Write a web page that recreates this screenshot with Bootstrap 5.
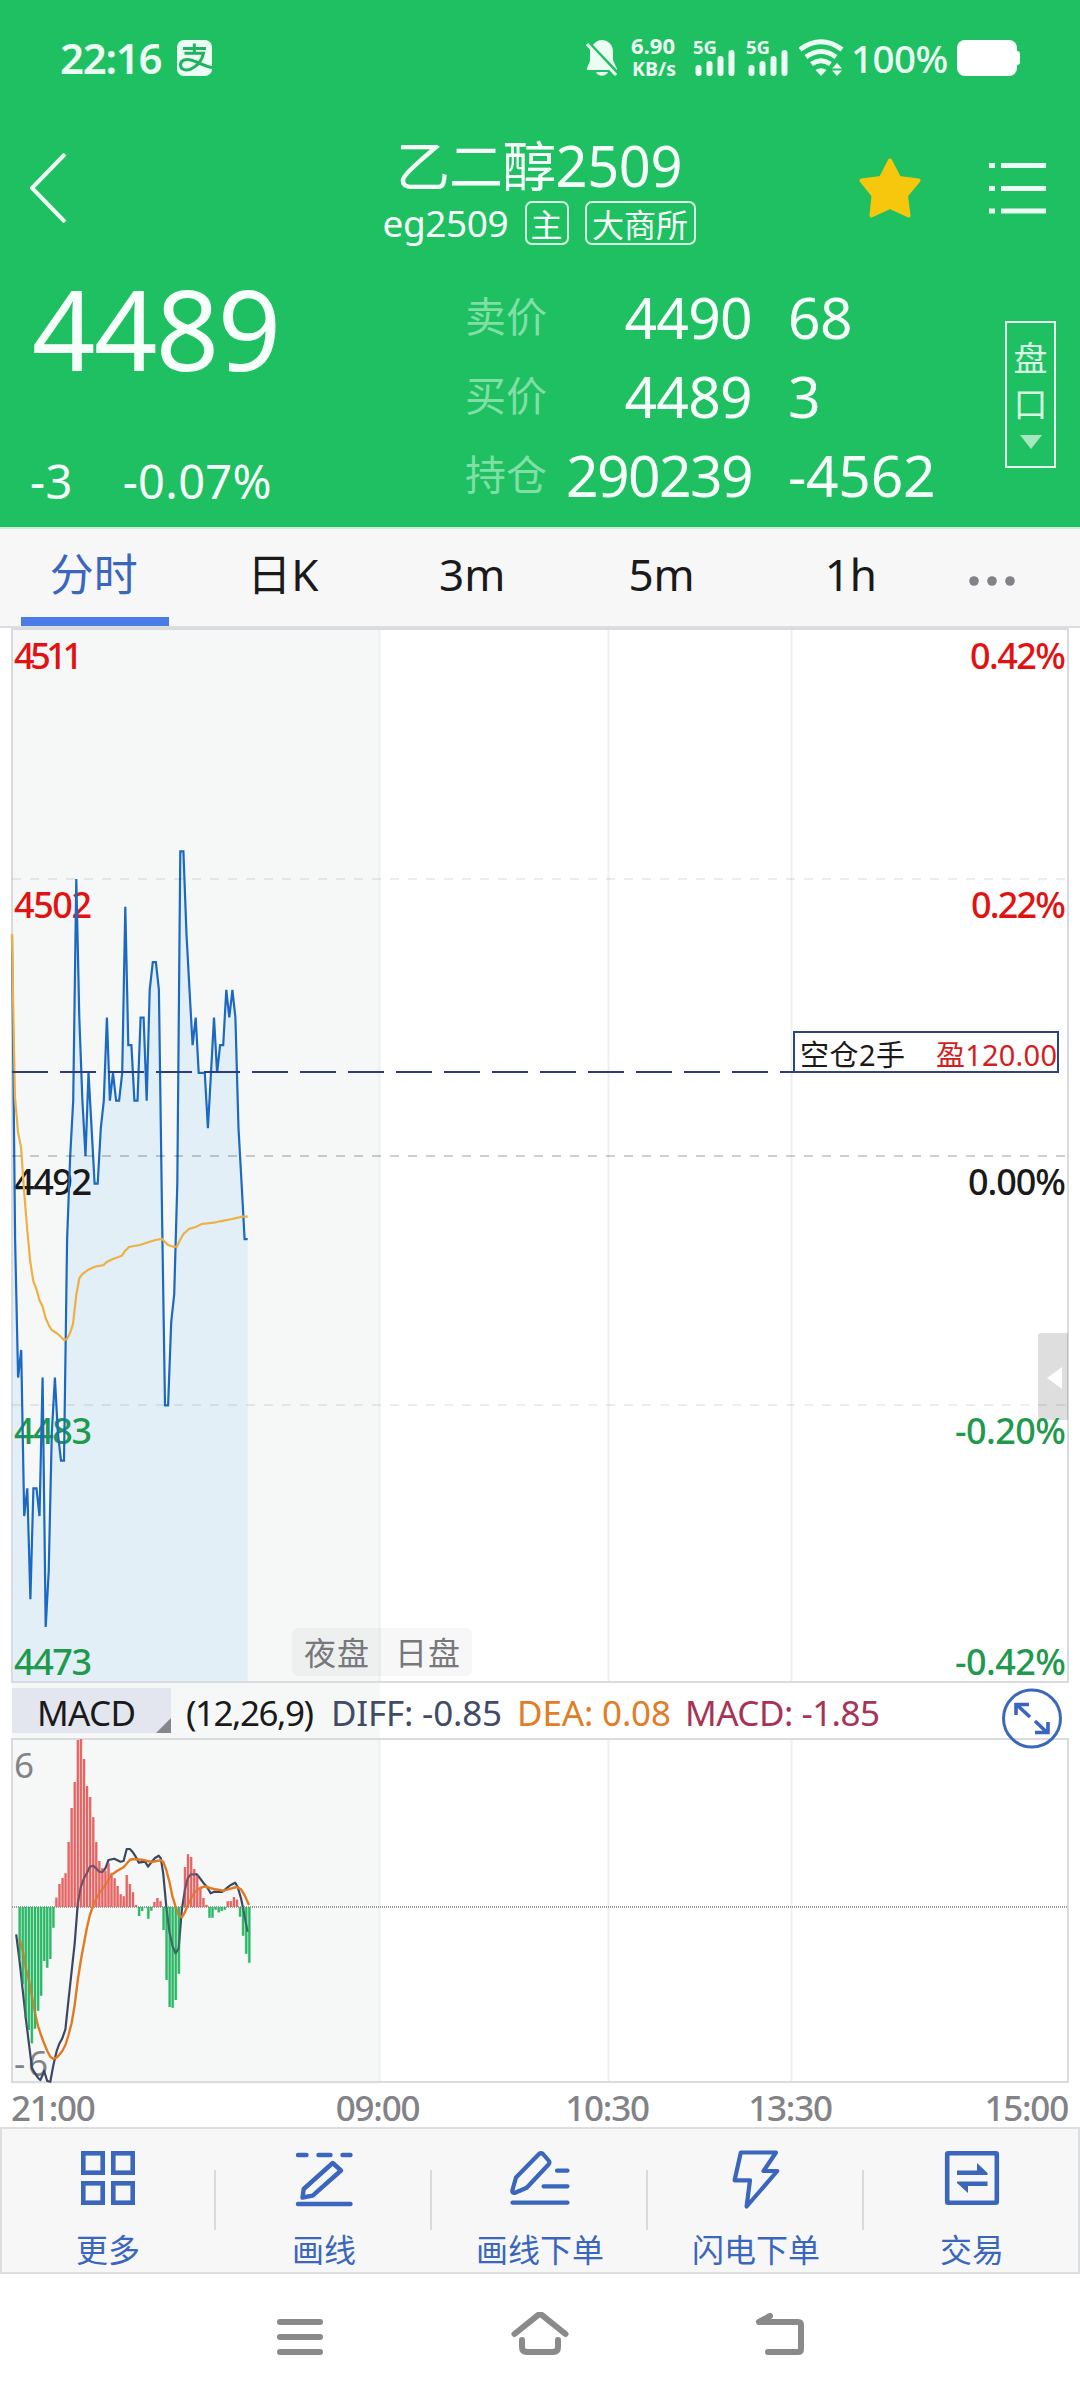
<!DOCTYPE html>
<html lang="zh-CN">
<head>
<meta charset="utf-8">
<meta name="viewport" content="width=1080">
<title>乙二醇2509</title>
<link rel="stylesheet" href="https://cdn.jsdelivr.net/npm/bootstrap@5.3.0/dist/css/bootstrap.min.css">
<style>
body{width:1080px;margin:0 auto;background:#fff;font-family:"Noto Sans","Noto Sans CJK SC",sans-serif;line-height:1;color:#1a1a1a;overflow-x:hidden}
svg{display:block;flex:none}
svg text{font-family:"Noto Sans","Noto Sans CJK SC",sans-serif}
.quote-head{background:#1fc061;color:#f6fffa;height:527px}
.status-row{height:116px;padding:0 60px;color:#ecfdf3}
.clock{font-size:42px;font-weight:600;width:102px;letter-spacing:-1.3px}
.title-row{height:143px}
.title-mid{padding-top:5px;padding-left:2px}
.name-line{font-size:56px;line-height:60px;letter-spacing:-.4px;margin-top:-1px}
.name-line span{font-size:54px;letter-spacing:-.8px}
.code-line{font-size:37px;height:44px;margin-top:5px;gap:16px}
.code-line .code{width:126px;letter-spacing:-.4px}
.chip-line{border:2px solid #d8f8e4;border-radius:7px;height:44px;font-size:32px;line-height:40px;font-family:"Noto Sans CJK SC",sans-serif}
.last-col{width:465px;padding-left:30px}
.last-price{font-size:111px;line-height:138px;letter-spacing:-1.6px;padding-left:2px;height:140px}
.last-change{font-size:47px;line-height:60px;margin-top:52px;gap:50px;letter-spacing:.3px}
.quote-grid{padding-top:20px;width:540px}
.quote-line{height:79px;font-size:57px;letter-spacing:-.7px}
.quote-line .tag{width:84px;font-size:41px;color:#7fdfa5;letter-spacing:0;margin-top:-8px;font-family:"Noto Sans CJK SC",sans-serif}
.quote-line .num{width:203px;margin-top:-3px}
.quote-line .vol{margin-left:36px;margin-top:-3px}
.quote-line .num.long{letter-spacing:-1.6px}
.quote-line .vol.long{letter-spacing:-.3px}
.pankou{width:51px;height:147px;margin-top:62px;border:2px solid #e3faec;font-size:34px;color:#d5f6e1;padding-top:17px;font-family:"Noto Sans CJK SC",sans-serif}
.period-tabs{height:101px;background:#f7f7f8;border-top:2px solid #cdeeda;border-bottom:2px solid #dbdde1;font-size:44px}
.period-tabs .nav-link{width:189.3px;color:#1a1a1a;padding:0;height:97px;line-height:91px;text-align:center;position:relative;left:-1px}
.period-tabs .nav-link.active{color:#3a66bd}
.period-tabs .nav-link.active::after{content:"";position:absolute;left:22px;right:19px;bottom:0;height:9px;background:#4b7be5}
.chart-zone{background:linear-gradient(to right,#fff 12px,#f6f8f8 12px 380px,#fff 380px)}
.ind-row{height:54px;padding:4px 17px 0 12px;font-size:34.5px}
.ind-btn{width:159px;height:45px;background:#e3e5ef;padding-left:25px;position:relative}
.ind-btn::after{content:"";position:absolute;right:0;bottom:0;border:solid transparent;border-width:0 0 15px 15px;border-bottom-color:#85858b}
.expand{position:relative;z-index:2}
.axis-row{height:43px;padding:0 12px 0 11px;font-size:35px;font-weight:500;color:#828287;line-height:47px;letter-spacing:-1.2px}
.tool-bar{height:147px;background:#f7f7f8;border:2px solid #dcdee0}
.tool-bar .tool{flex:0 0 216px;color:#3a66bd;font-size:32px;padding-top:18px;position:relative;left:-2px;font-family:"Noto Sans CJK SC",sans-serif}
.tool+.tool::before{content:"";position:absolute;left:-2px;top:41px;width:2px;height:60px;background:#d9dadd}
.tool svg{margin-bottom:21px}
.sys-bar{height:126px;width:720px}
</style>
<script src="https://cdn.jsdelivr.net/npm/bootstrap@5.3.0/dist/js/bootstrap.bundle.min.js"></script>
</head>
<body>
<header class="quote-head">
  <div class="status-row d-flex align-items-center">
    <span class="clock text-nowrap">22:16</span>
    <svg style="margin-left:15px" width="35" height="36" viewBox="0 0 35 36"><rect width="35" height="36" rx="7" fill="#ecfdf3"/><g fill="none" stroke="#20b35f" stroke-width="3"><path d="M6 8.500H29M17.300 3.500V13M7.500 13.300H26.500C25 20 20 26 14 29C8 31.500 3.500 29 3.500 24.500C4 20 9 18.500 14 20C20 21.500 27 26 35 27.500"/></g></svg>
    <svg class="ms-auto" width="32" height="38" viewBox="0 0 32 38"><path fill="#ecfdf3" d="M7 6C9 3 12 1 16 1C22 1 27 6 27 12V21L31 30V31ZM4 9L25 31H1V29L4 22ZM10 33H22C20 38 12 38 10 33Z"/><path d="M1 5L30 36" stroke="#ecfdf3" stroke-width="3"/></svg>
    <svg style="margin-left:13px" width="46" height="52" viewBox="0 -5 46 52"><g fill="#ecfdf3" font-weight="700"><text x="0" y="17" font-size="21" textLength="44" lengthAdjust="spacingAndGlyphs">6.90</text><text x="1" y="39" font-size="19.500" textLength="44" lengthAdjust="spacingAndGlyphs">KB/s</text></g></svg>
    <svg style="margin-left:16px" width="43" height="48" viewBox="0 -3 43 48"><text x="0" y="16.500" font-size="18.500" font-weight="700" fill="#ecfdf3" textLength="24">5G</text><path d="M5.500 31V36M16.500 27V36M27.500 22V36M38.500 16V36" stroke="#ecfdf3" stroke-width="6" stroke-linecap="round"/></svg>
    <svg style="margin-left:10px" width="43" height="48" viewBox="0 -3 43 48"><text x="0" y="16.500" font-size="18.500" font-weight="700" fill="#ecfdf3" textLength="24">5G</text><path d="M5.500 31V36M16.500 27V36M27.500 22V36M38.500 16V36" stroke="#ecfdf3" stroke-width="6" stroke-linecap="round"/></svg>
    <svg style="margin-left:10px" width="45" height="38" viewBox="0 0 45 38"><g fill="none" stroke="#ecfdf3" stroke-width="4.800"><path d="M1 10.500Q22 -5 43 10.500M7 18Q22 7 37 18M12.500 25Q22 18.500 31.500 25"/></g><path fill="#ecfdf3" d="M16.500 31Q22 27.500 27.500 31L22 37ZM33 29.500L38 24L43 29.500ZM33 31.500H43L38 37Z"/></svg>
    <span class="text-nowrap" style="margin-left:7px;width:95px;font-size:38.500px;font-weight:500;letter-spacing:-.5px">100%</span>
    <svg style="margin-left:11px" width="63" height="36" viewBox="0 0 63 36"><rect width="60" height="36" rx="8" fill="#fff"/><rect x="55" y="11" width="8" height="14" rx="3" fill="#fff"/></svg>
  </div>
  <div class="title-row d-flex align-items-center">
    <div style="flex:1 1 0;padding-left:30px"><svg width="37" height="70" viewBox="0 0 37 70"><path d="M35 1L2 35L35 69" fill="none" stroke="#f1fff7" stroke-width="4"/></svg></div>
    <div class="title-mid d-flex flex-column align-items-center text-nowrap">
      <div class="name-line"><span>乙二醇</span>2509</div>
      <div class="code-line d-flex align-items-center"><span class="code">eg2509</span><span class="chip-line text-center" style="width:44px">主</span><span class="chip-line text-center" style="width:111px">大商所</span></div>
    </div>
    <div class="d-flex justify-content-end align-items-center" style="flex:1 1 0;padding-right:34px;gap:68px">
      <svg width="62" height="60" viewBox="0 0 62 60"><path d="M31 2.500L40 20L59.500 22.500L47 37.500L49.500 57.500L31 49L12.500 57.500L14.500 37.500L2.500 22.500L22 20Z" fill="#f6c70c" stroke="#f6c70c" stroke-width="4" stroke-linejoin="round"/></svg>
      <svg width="57" height="52" viewBox="0 0 57 52"><path d="M0 3.500H6M12 3.500H57M0 26.500H6M12 26.500H57M0 49H6M12 49H57" stroke="#ecfdf3" stroke-width="5"/></svg>
    </div>
  </div>
  <div class="d-flex">
    <div class="last-col"><div class="last-price">4489</div><div class="last-change d-flex"><span>-3</span><span>-0.07%</span></div></div>
    <div class="quote-grid">
      <div class="quote-line d-flex align-items-center"><span class="tag">卖价</span><span class="num text-end">4490</span><span class="vol">68</span></div>
      <div class="quote-line d-flex align-items-center"><span class="tag">买价</span><span class="num text-end">4489</span><span class="vol">3</span></div>
      <div class="quote-line d-flex align-items-center"><span class="tag">持仓</span><span class="num long text-end">290239</span><span class="vol long">-4562</span></div>
    </div>
    <div class="pankou d-flex flex-column align-items-center"><span>盘</span><span style="margin-top:12px">口</span><svg style="margin-top:15px" width="22" height="14" viewBox="0 0 22 14"><path d="M0 0H22L11 14Z" fill="#a5e8c0"/></svg></div>
  </div>
</header>

<nav class="period-tabs nav flex-nowrap">
  <a class="nav-link active">分时</a><a class="nav-link">日K</a><a class="nav-link">3m</a><a class="nav-link">5m</a><a class="nav-link">1h</a>
  <svg style="margin:46px 0 0 22px" width="50" height="12" viewBox="0 0 50 12"><g fill="#828288"><circle cx="6" cy="6" r="4.800"/><circle cx="24" cy="6" r="4.800"/><circle cx="42" cy="6" r="4.800"/></g></svg>
</nav>

<main class="chart-zone">
  <svg id="priceChart" width="1080" height="1056" viewBox="0 628 1080 1056">
    <g stroke="#eef0f0" stroke-width="2"><path d="M379.500 629V1682M608.500 629V1682M791.500 629V1682"/></g>
    <g id="priceArea"></g>
    <path d="M12 629H1068V1682H12Z" fill="none" stroke="#d9dbdf" stroke-width="2"/>
    <g font-size="36" font-weight="500">
      <g fill="#e31212"><text x="14" y="669" textLength="69">4511</text><text x="14" y="918" textLength="78">4502</text></g>
      <text x="14" y="1195" textLength="78" fill="#1a1a1a">4492</text>
      <g fill="#1f9a4c"><text x="14" y="1444" textLength="78">4483</text><text x="14" y="1675" textLength="78">4473</text></g>
      <text x="970" y="669" textLength="96" fill="#e31212">0.42%</text><text x="971" y="918" textLength="95" fill="#e31212">0.22%</text><text x="968" y="1195" textLength="98" fill="#1a1a1a">0.00%</text>
    </g>
    <g id="priceLines"></g>
    <g fill="none" stroke-width="2" stroke-dasharray="9 9"><path d="M12 879H1068M12 1405H1068" stroke="#000" stroke-opacity=".07"/><path d="M12 1156H1068" stroke="#000" stroke-opacity=".19"/></g>
    <path d="M12 1072H1068" stroke="#2a3c83" stroke-width="2" stroke-dasharray="36 12"/>
    <rect x="794" y="1032" width="264" height="40" fill="#fff" stroke="#2c4580" stroke-width="2"/>
    <g font-size="29"><text x="800" y="1066" fill="#1a1a1a" textLength="105">空仓2手</text><text x="936" y="1066" fill="#d41d1d" textLength="121">盈120.00</text></g>
    <path d="M1041 1333H1068V1420H1041Q1038 1420 1038 1417V1336Q1038 1333 1041 1333Z" fill="#000" fill-opacity=".13"/><path d="M1062 1367V1389L1047 1378Z" fill="#fff"/>
    <g font-size="36" font-weight="500" fill="#1f9a4c"><text x="955" y="1444" textLength="111">-0.20%</text><text x="955" y="1675" textLength="111">-0.42%</text></g>
    <rect x="292" y="1628" width="180" height="48" rx="6" fill="#000" fill-opacity=".032"/>
    <g font-size="32" fill="#77777c"><text x="304" y="1665" textLength="65">夜盘</text><text x="395" y="1665" textLength="65">日盘</text></g>
  </svg>
  <div class="ind-row d-flex text-nowrap">
    <div class="ind-btn d-flex"><svg width="110" height="45"><text x="0" y="38" font-size="35" fill="#1a1a1a" textLength="99">MACD</text></svg></div>
    <svg width="720" height="50" viewBox="171 1688 720 50"><g font-size="35"><text x="186" y="1726" fill="#1a1a1a" textLength="128">(12,26,9)</text><text x="331" y="1726" fill="#424b66" textLength="171">DIFF: -0.85</text><text x="517" y="1726" fill="#e07d26" textLength="154">DEA: 0.08</text><text x="685" y="1726" fill="#a73356" textLength="195">MACD: -1.85</text></g></svg>
    <svg class="expand ms-auto" width="62" height="62" viewBox="0 0 62 62"><circle cx="31" cy="30.500" r="28.500" fill="none" stroke="#3b68b9" stroke-width="3"/><path d="M29 29L16 17M15 27V16.500H28M34 33L46 44.500M47 34V44.500H34" fill="none" stroke="#3a66c2" stroke-width="3.600"/></svg>
  </div>
  <svg id="macdChart" width="1080" height="346" viewBox="0 1738 1080 346">
    <path d="M379.500 1739V2081M608.500 1739V2081M791.500 1739V2081" stroke="#eef0f0" stroke-width="2"/>
    <path d="M12 1739H1068V2082H12Z" fill="none" stroke="#d9dbdf" stroke-width="2"/>
    <path d="M12 1907H1068" stroke="#9a9b9d" stroke-width="2" stroke-dasharray="1 1"/>
    <g font-size="35" fill="#828287"><text x="14" y="1778">6</text><text x="14" y="2076" textLength="34">-6</text></g>
    <g id="macdLines"></g>
  </svg>
</main>

<div class="axis-row d-flex">
  <span style="width:242px">21:00</span><span class="text-center" style="width:249px">09:00</span><span class="text-center" style="width:210px">10:30</span><span class="text-center" style="width:156px">13:30</span><span class="ms-auto">15:00</span>
</div>

<footer>
  <div class="tool-bar d-flex">
    <div class="tool d-flex flex-column align-items-center"><svg width="60" height="64" viewBox="78 2147 60 64"><g fill="none" stroke="#3a66bd" stroke-width="4.600"><rect x="83.300" y="2153.300" width="19.400" height="19.400"/><rect x="113.300" y="2153.300" width="19.400" height="19.400"/><rect x="83.300" y="2183.300" width="19.400" height="19.400"/><rect x="113.300" y="2183.300" width="19.400" height="19.400"/></g></svg><span>更多</span></div>
    <div class="tool d-flex flex-column align-items-center"><svg width="60" height="64" viewBox="294 2147 60 64"><g fill="none" stroke="#3a66bd" stroke-width="4.400" stroke-linecap="round" stroke-linejoin="round"><path d="M298 2155H306.500M318.500 2155H330.500M342.500 2155H350.500M298 2204H350.500M332.700 2163L341 2170.500L312.700 2195.700L302.500 2197.500L303.700 2189Z"/></g></svg><span>画线</span></div>
    <div class="tool d-flex flex-column align-items-center"><svg width="60" height="64" viewBox="510 2147 60 64"><g fill="none" stroke="#3a66bd" stroke-width="4.200" stroke-linecap="round" stroke-linejoin="round"><path d="M557 2170.700H567.500M543.500 2186.300H567.500M512.500 2202.700H567.500M539 2154Q541 2152.500 543 2154L549 2161Q550 2163 548.500 2164.500L526.700 2187.700L514.500 2193Q512 2193 512.300 2190.500L516 2177.500Z"/></g></svg><span>画线下单</span></div>
    <div class="tool d-flex flex-column align-items-center"><svg width="60" height="64" viewBox="726 2147 60 64"><path d="M740.800 2152.500H776L763.500 2171H777.300L746.600 2206.500L750 2180.300H734.600Z" fill="none" stroke="#3a66bd" stroke-width="4.200" stroke-linejoin="round"/></svg><span>闪电下单</span></div>
    <div class="tool d-flex flex-column align-items-center"><svg width="60" height="64" viewBox="942 2147 60 64"><rect x="947.200" y="2153.200" width="49.600" height="49.600" rx="1" fill="none" stroke="#3a66bd" stroke-width="4.600"/><path d="M957 2170.500H977V2163L987.500 2173V2175H957ZM987.500 2181.500V2186H968V2193L957 2183V2181.500Z" fill="#3a66bd"/></svg><span>交易</span></div>
  </div>
  <div class="sys-bar row g-0 mx-auto align-items-center">
    <div class="col d-flex justify-content-center"><svg width="60" height="50" viewBox="0 0 60 50"><path d="M10 10H50M10 25H50M10 40H50" stroke="#8a8a8a" stroke-width="6" stroke-linecap="round"/></svg></div>
    <div class="col d-flex justify-content-center"><svg width="60" height="50" viewBox="0 0 60 50"><path d="M4.500 22L28 3.200Q30 1.800 32 3.200L55.500 22M12 28V35Q12 40 17 40H43Q48 40 48 35V28" fill="none" stroke="#8a8a8a" stroke-width="6" stroke-linecap="round" stroke-linejoin="round"/></svg></div>
    <div class="col d-flex justify-content-center"><svg width="60" height="50" viewBox="0 0 60 50"><path d="M20 4L9 10H48Q51 10 51 13V37Q51 40 48 40H18" fill="none" stroke="#8a8a8a" stroke-width="6" stroke-linecap="round" stroke-linejoin="round"/></svg></div>
  </div>
</footer>

<script>
// One price per minute from 21:00; 345 trading minutes span the chart.
const prices=[4500,4489,4484,4485,4479,4480,4476,4480,4480,4479,4484,4475,4477,4482,4484,4482,4481,4481,4489,4492,4494,4502,4497,4494,4492,4495,4493,4491,4491,4493,4494,4497,4494,4495,4494,4494,4495,4501,4496,4496,4494,4494,4497,4497,4494,4498,4499,4499,4498,4490,4483,4483,4486,4487,4491,4503,4503,4500,4498,4496,4497,4495,4495,4495,4493,4495,4497,4495,4496,4496,4498,4497,4498,4497,4493,4491,4489,4489];
const step=1056/345, px=i=>12+i*step, py=p=>1156-27.7*(p-4492);
const pts=prices.map((p,i)=>px(i).toFixed(1)+','+py(p).toFixed(1)).join(' ');
const average="12,934 13.7,1033 15,1097 18,1132 21,1147 24,1190 27,1227 30.3,1262 33.3,1281 36.4,1289 39.4,1300 42.4,1306 45.6,1318 48.7,1325 51.7,1330 55,1332 58,1334 61,1337 64,1340 67,1339 70,1333 73,1324 76.3,1295 79.4,1278 82.4,1274 88.4,1269.7 94.6,1266.7 103.7,1265 106.7,1262 113,1259 122,1255.7 125,1251 129,1247 134,1246 140,1245 149.7,1241.7 155.7,1240 162,1239 167.7,1244.7 173,1246.7 177,1246.7 180,1240 183.5,1234 189,1229 195.7,1227 201.7,1224 214,1222.7 220,1221.3 232,1219 238,1217.7 241.7,1216.7 247.7,1216.7";
document.getElementById('priceArea').innerHTML=
 `<polygon points="12,1682 ${pts} ${px(77)},1682" fill="#e2eff7"/>`;
document.getElementById('priceLines').innerHTML=
 `<polyline points="${pts}" fill="none" stroke="#1b69c0" stroke-width="2.2"/>`+
 `<polyline points="${average}" fill="none" stroke="#eeb044" stroke-width="2.2"/>`;

// Bar tips, from minute 2 on, in plot units (x at 2.904 per pixel, y at 3 per pixel, zero at 740).
const tips=[897,973,1075,1110,1150,1106,1052,1007,903,923,897,803,713,672,654,640,546,444,366,240,237,297,378,411,472,546,603,625,632,610,640,655,678,703,709,645,672,697,735,768,753,742,776,752,726,714,724,810,960,1041,1043,1020,941,745,621,583,591,627,645,684,714,735,773,773,749,757,753,749,724,723,711,719,770,827,881,908];
const conv=s=>s.split(' ').map(q=>{const[a,b]=q.split(',');return(a/2.904).toFixed(1)+','+(1660+b/3).toFixed(1)}).join(' ');
const diff=conv("47,823 57,905 66,990 75,1075 84,1150 93,1225 102,1240 110,1253 117,1260 124,1245 128,1232 137,1263 146,1265 155,1215 164,1175 172,1152 181,1135 190,1108 199,1020 208,935 217,850 226,730 235,680 244,655 252,640 261,620 270,617 279,625 288,635 297,636 306,625 315,600 332,596 350,605 359,603 368,567 377,567 386,577 394,590 403,608 421,605 430,620 439,607 450,594 461,587 467,595 474,640 483,740 492,815 501,858 510,880 519,865 528,750 537,690 545,655 554,643 572,643 581,655 590,668 599,678 612,700 622,695 645,696 660,683 670,675 683,668 690,680 700,715 708,755 714,790 719,815");
const dea=conv("57,838 66,870 75,925 84,960 93,1010 102,1060 110,1097 119,1125 128,1150 137,1172 146,1190 155,1197 164,1193 172,1185 181,1173 190,1155 199,1125 208,1090 217,1035 226,960 235,900 244,850 252,805 261,765 270,738 279,717 288,700 306,675 323,645 341,632 359,622 377,600 386,597 412,599 440,606 467,601 474,605 483,630 492,665 501,710 510,740 519,765 528,772 537,757 545,735 563,700 572,690 581,684 596,679 610,684 625,688 650,692 670,686 688,681 700,688 710,705 723,735");
let bars='';
tips.forEach((t,i)=>{const x=19.7+i*step,y=1660+t/3,up=t<740,top=Math.min(y,1907),h=Math.abs(y-1907);
 bars+=`<rect x="${(x-1.5).toFixed(1)}" y="${top.toFixed(1)}" width="3" height="${h.toFixed(1)}" fill="${up?'#ff9d9a':'#6fdb9c'}" fill-opacity=".55"/><rect x="${(x-1).toFixed(1)}" y="${top.toFixed(1)}" width="2" height="${h.toFixed(1)}" fill="${up?'#dd5c5c':'#1eb05a'}" fill-opacity=".85"/>`});
document.getElementById('macdLines').innerHTML=
 bars+`<polyline points="${diff}" fill="none" stroke="#3b4763" stroke-width="2.2" stroke-linejoin="round"/><polyline points="${dea}" fill="none" stroke="#e27a22" stroke-width="2.4" stroke-linejoin="round"/><g opacity=".4">${bars}</g>`;
</script>
</body>
</html>
